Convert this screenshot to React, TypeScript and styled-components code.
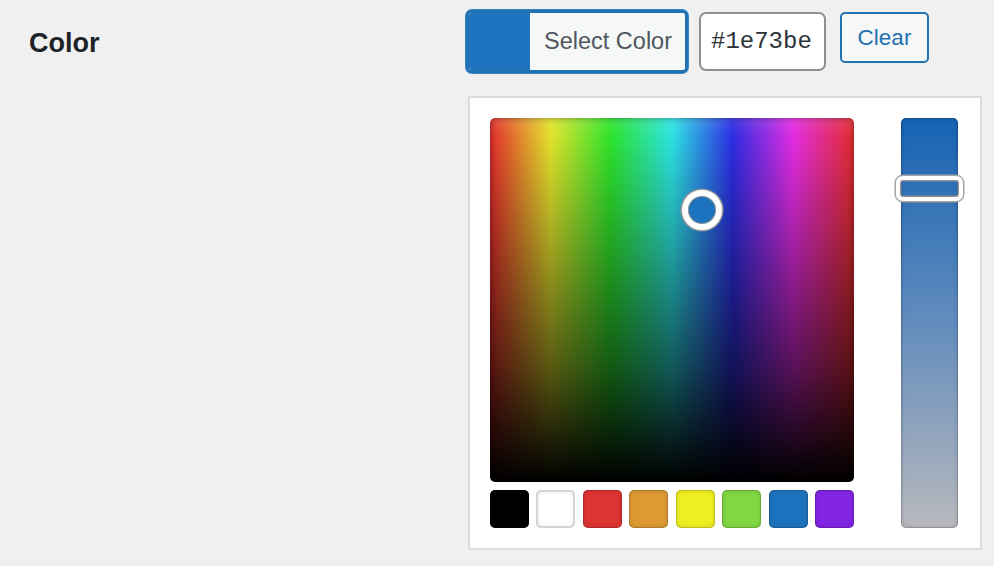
import React from "react";
import styled, { createGlobalStyle } from "styled-components";

const swatches = [
  "#000000",
  "#ffffff",
  "#dd3333",
  "#dd9933",
  "#eeee22",
  "#81d742",
  "#1e73be",
  "#8224e3",
];

const hueStops = [0, 30, 60, 90, 120, 150, 180, 210, 240, 270, 300, 330, 360]
  .map((h) => `hsl(${h}, 76%, 53%)`)
  .join(", ");

export default function App() {
  const value = "#1e73be";

  return (
    <>
      <GlobalStyle />
      <FormRow>
        <Label>Color</Label>
        <Controls>
          <Toolbar>
            <SelectButton type="button">
              <ColorChip $color={value} />
              <SelectText>Select Color</SelectText>
            </SelectButton>
            <HexInput defaultValue={value} />
            <ClearButton type="button">Clear</ClearButton>
          </Toolbar>

          <PickerPanel>
            <LeftColumn>
              <ColorSquare>
                <SquareHandle $color={value} />
              </ColorSquare>
              <SwatchRow>
                {swatches.map((c) => (
                  <Swatch key={c} $color={c} $light={c === "#ffffff"} />
                ))}
              </SwatchRow>
            </LeftColumn>
            <Slider>
              <SliderHandle />
            </Slider>
          </PickerPanel>
        </Controls>
      </FormRow>
    </>
  );
}

const GlobalStyle = createGlobalStyle`
  body {
    margin: 0;
    background: #f0f0f1;
    font-family: "Liberation Sans", Arial, sans-serif;
  }
`;

const FormRow = styled.div`
  display: grid;
  grid-template-columns: 466px auto;
  padding-top: 10px;
`;

const Label = styled.div`
  padding: 18px 0 0 29px;
  font-size: 27px;
  font-weight: 700;
  color: #1d2327;
`;

const Controls = styled.div`
  display: flex;
  flex-direction: column;
  align-items: flex-start;
`;

const Toolbar = styled.div`
  display: flex;
  align-items: flex-start;
`;

const SelectButton = styled.button`
  display: flex;
  width: 222px;
  height: 63px;
  padding: 0;
  border: 3px solid #2271b1;
  border-radius: 6px;
  overflow: hidden;
  background: #f6f7f7;
  box-shadow: 0 0 0 1px #3582c4;
  cursor: pointer;
`;

const ColorChip = styled.span<{ $color: string }>`
  width: 61px;
  height: 100%;
  background: ${(p) => p.$color};
`;

const SelectText = styled.span`
  flex: 1;
  display: flex;
  align-items: center;
  padding-left: 14px;
  font-family: "Liberation Sans", Arial, sans-serif;
  font-size: 23.5px;
  color: #50575e;
  background: #f6f7f7;
`;

const HexInput = styled.input`
  box-sizing: border-box;
  width: 127px;
  height: 59px;
  margin: 2px 0 0 11px;
  padding: 0 0 0 10px;
  border: 2px solid #8c8f94;
  border-radius: 7px;
  background: #fff;
  font-family: "Liberation Mono", "Courier New", monospace;
  font-size: 24px;
  color: #2c3338;
  outline: none;
`;

const ClearButton = styled.button`
  box-sizing: border-box;
  width: 89px;
  height: 51px;
  margin: 2px 0 0 14px;
  padding: 0;
  border: 2px solid #2271b1;
  border-radius: 5px;
  background: #f6f7f7;
  color: #2271b1;
  font-family: "Liberation Sans", Arial, sans-serif;
  font-size: 22.5px;
  cursor: pointer;
`;

const PickerPanel = styled.div`
  box-sizing: border-box;
  display: flex;
  justify-content: space-between;
  width: 514px;
  margin: 23px 0 0 2px;
  padding: 20px 22px 20px 20px;
  border: 2px solid #dcdcde;
  background: #fff;
`;

const LeftColumn = styled.div`
  display: flex;
  flex-direction: column;
  gap: 8px;
  width: 364px;
`;

const ColorSquare = styled.div`
  position: relative;
  height: 364px;
  border-radius: 5px;
  background: linear-gradient(
      to bottom,
      rgba(255, 255, 255, 0.1) 0%,
      rgba(0, 0, 0, 0) 5%,
      rgba(0, 0, 0, 0.28) 35%,
      rgba(0, 0, 0, 0.6) 68%,
      rgba(0, 0, 0, 0.9) 92%,
      #000 100%
    ),
    linear-gradient(to right, ${hueStops});
  box-shadow: inset 0 0 6px rgba(0, 0, 0, 0.4);
`;

const SquareHandle = styled.div<{ $color: string }>`
  position: absolute;
  left: 192px;
  top: 72px;
  box-sizing: border-box;
  width: 40px;
  height: 40px;
  border: 6px solid #fff;
  border-radius: 50%;
  background: ${(p) => p.$color};
  box-shadow: 0 0 0 1.5px #9a9a9a, inset 0 0 0 1px #8f8f8f;
`;

const SwatchRow = styled.div`
  display: flex;
  justify-content: space-between;
`;

const Swatch = styled.div<{ $color: string; $light: boolean }>`
  width: 39px;
  height: 38px;
  border-radius: 5px;
  background: ${(p) => p.$color};
  box-shadow: ${(p) =>
    p.$light
      ? "inset 0 0 0 2px #d4d4d6, inset 0 0 6px rgba(0,0,0,0.15)"
      : "inset 0 0 0 1px rgba(0,0,0,0.12), inset 0 0 5px rgba(0,0,0,0.18)"};
`;

const Slider = styled.div`
  position: relative;
  width: 57px;
  height: 410px;
  border-radius: 5px;
  background: linear-gradient(to bottom, #1663b3 0%, #5a88bd 45%, #b8b9bd 100%);
  box-shadow: inset 0 0 0 1px rgba(0, 0, 0, 0.12), inset 0 0 5px rgba(0, 0, 0, 0.2);
`;

const SliderHandle = styled.div`
  position: absolute;
  left: -5px;
  top: 58px;
  box-sizing: border-box;
  width: 67px;
  height: 25px;
  border: 4px solid #fff;
  border-radius: 7px;
  background: transparent;
  box-shadow: 0 0 0 1.5px #a5a5a5, inset 0 0 0 1.5px #909090,
    0 1px 3px rgba(0, 0, 0, 0.2);
`;
